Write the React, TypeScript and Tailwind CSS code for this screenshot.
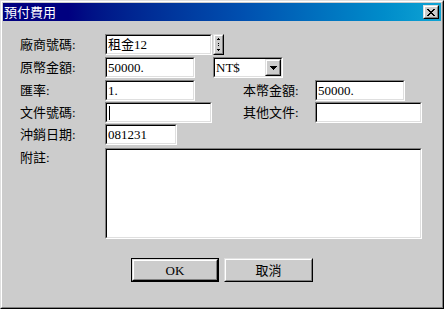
import React from "react";

const sunkenOuter =
  "border border-t-[#808080] border-l-[#808080] border-b-white border-r-white";
const sunkenInner =
  "border border-t-black border-l-black border-b-[#dfdfdf] border-r-[#dfdfdf] bg-white";
const raisedOuter =
  "border border-t-[#dfdfdf] border-l-[#dfdfdf] border-b-black border-r-black";
const raisedInner =
  "border border-t-white border-l-white border-b-[#808080] border-r-[#808080] bg-[#cccccc]";

function Field({ className, children }: { className: string; children?: React.ReactNode }) {
  return (
    <div className={`${sunkenOuter} ${className} flex`}>
      <div className={`${sunkenInner} flex-1 flex items-center pl-[1px] text-[13px] leading-[15px] text-black overflow-hidden`}>
        {children}
      </div>
    </div>
  );
}

function Label({ className, children }: { className: string; children: React.ReactNode }) {
  return <div className={`${className} text-[13px] leading-[16px] text-black shrink-0`}>{children}</div>;
}

function Raised({ className, children }: { className: string; children?: React.ReactNode }) {
  return (
    <div className={`${raisedOuter} ${className} flex`}>
      <div className={`${raisedInner} flex-1 flex items-center justify-center`}>{children}</div>
    </div>
  );
}

export default function App() {
  return (
    <div className="w-[444px] h-[309px] font-['Liberation_Serif','Noto_Sans_CJK_TC',serif] select-none">
      <div className="w-full h-full border border-t-[#dfdfdf] border-l-[#dfdfdf] border-b-black border-r-black">
        <div className="w-full h-full border border-t-white border-l-white border-b-[#808080] border-r-[#808080] bg-[#cccccc] p-[1px] flex flex-col">
          {/* Title bar */}
          <div className="h-[18px] shrink-0 flex items-center justify-between bg-linear-to-r from-[#000080] from-15% via-[#0050b0] via-55% to-[#10a4d4]">
            <div className="pl-[1px] text-white text-[13px] leading-[16px] font-['Noto_Sans_CJK_TC',sans-serif]">預付費用</div>
            <Raised className="w-[16px] h-[14px] mr-[2px]">
              <svg width="8" height="7" viewBox="0 0 8 7" shapeRendering="crispEdges">
                <path d="M0 0h2v1h1v1h2V1h1V0h2v1H7v1H6v1H5v1h1v1h1v1h1v1H6V6H5V5H3v1H2v1H0V6h1V5h1V4h1V3H2V2H1V1H0z" fill="black" />
              </svg>
            </Raised>
          </div>

          {/* Body */}
          <div className="flex flex-col pl-[17px]">
            {/* Row 1 */}
            <div className="flex items-center h-[21px] mt-[13px]">
              <Label className="w-[85px]">廠商號碼:</Label>
              <Field className="w-[107px] h-[21px]">租金12</Field>
              <Raised className="w-[11px] h-[21px] ml-[1px]">
                <svg width="5" height="13" viewBox="0 0 5 13" shapeRendering="crispEdges">
                  <path d="M2 0h1v1h1v1H1V1h1z" fill="black" />
                  <rect x="2" y="5" width="1" height="1" fill="black" />
                  <rect x="2" y="7" width="1" height="1" fill="black" />
                  <path d="M1 11h3v1H3v1H2v-1H1z" fill="black" />
                </svg>
              </Raised>
            </div>

            {/* Row 2 */}
            <div className="flex items-center h-[21px] mt-[2px]">
              <Label className="w-[85px]">原幣金額:</Label>
              <Field className="w-[90px] h-[21px]">50000.</Field>
              <div className={`${sunkenOuter} w-[70px] h-[21px] ml-[18px] flex`}>
                <div className={`${sunkenInner} flex-1 flex items-center`}>
                  <div className="flex-1 pl-[1px] text-[13px] leading-[15px]">NT$</div>
                  <Raised className="w-[16px] h-[17px]">
                    <svg width="7" height="4" viewBox="0 0 7 4" shapeRendering="crispEdges">
                      <path d="M0 0h7v1H6v1H5v1H4v1H3V3H2V2H1V1H0z" fill="black" />
                    </svg>
                  </Raised>
                </div>
              </div>
            </div>

            {/* Row 3 */}
            <div className="flex items-center h-[21px] mt-[2px]">
              <Label className="w-[85px]">匯率:</Label>
              <Field className="w-[90px] h-[21px]">1.</Field>
              <Label className="w-[72px] ml-[48px]">本幣金額:</Label>
              <Field className="w-[90px] h-[21px]">50000.</Field>
            </div>

            {/* Row 4 */}
            <div className="flex items-center h-[21px] mt-[1px]">
              <Label className="w-[85px]">文件號碼:</Label>
              <Field className="w-[107px] h-[21px]">
                <div className="w-[1px] h-[14px] bg-black ml-[1px]" />
              </Field>
              <Label className="w-[72px] ml-[31px]">其他文件:</Label>
              <Field className="w-[107px] h-[21px]" />
            </div>

            {/* Row 5 */}
            <div className="flex items-center h-[21px] mt-[1px]">
              <Label className="w-[85px]">沖銷日期:</Label>
              <Field className="w-[72px] h-[21px]">081231</Field>
            </div>

            {/* Row 6 */}
            <div className="flex items-start h-[91px] mt-[3px]">
              <Label className="w-[85px] pt-[2px]">附註:</Label>
              <div className={`${sunkenOuter} w-[317px] h-[91px] flex`}>
                <div className={`${sunkenInner} flex-1`} />
              </div>
            </div>
          </div>

          {/* Buttons */}
          <div className="flex items-center pl-[128px] mt-[19px] gap-[5px]">
            <div className="border border-black w-[88px] h-[24px] flex">
              <Raised className="flex-1">
                <span className="text-[13px] leading-[15px]">OK</span>
              </Raised>
            </div>
            <Raised className="w-[89px] h-[24px]">
              <span className="text-[13px] leading-[15px]">取消</span>
            </Raised>
          </div>
        </div>
      </div>
    </div>
  );
}
